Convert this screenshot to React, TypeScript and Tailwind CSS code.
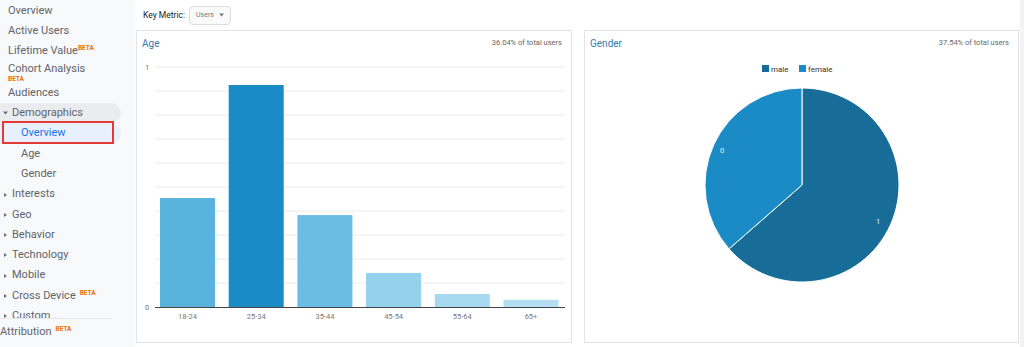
import React from "react";

type Item = {
  label: string;
  arrow?: "right" | "down";
  beta?: "sup" | "space" | "below";
  sub?: boolean;
  active?: boolean;
  open?: boolean;
};

const items: Item[] = [
  { label: "Overview" },
  { label: "Active Users" },
  { label: "Lifetime Value", beta: "sup" },
  { label: "Cohort Analysis", beta: "below" },
  { label: "Audiences" },
  { label: "Demographics", arrow: "down", open: true },
  { label: "Overview", sub: true, active: true },
  { label: "Age", sub: true },
  { label: "Gender", sub: true },
  { label: "Interests", arrow: "right" },
  { label: "Geo", arrow: "right" },
  { label: "Behavior", arrow: "right" },
  { label: "Technology", arrow: "right" },
  { label: "Mobile", arrow: "right" },
  { label: "Cross Device", arrow: "right", beta: "space" },
  { label: "Custom...", arrow: "right" },
];

const ages = [
  { label: "18-24", value: 0.454, color: "#5ab3dc" },
  { label: "25-34", value: 0.925, color: "#1b8bc6" },
  { label: "35-44", value: 0.383, color: "#6cbde3" },
  { label: "45-54", value: 0.142, color: "#94d1ed" },
  { label: "55-64", value: 0.054, color: "#a6d9f0" },
  { label: "65+", value: 0.03, color: "#b3dff3" },
];

function Beta({ className = "" }: { className?: string }) {
  return (
    <span className={`text-[6.5px] font-bold leading-none text-[#e8710a] ${className}`}>BETA</span>
  );
}

function Arrow({ dir }: { dir: "right" | "down" }) {
  return (
    <svg width="5" height="6" viewBox="0 0 5 6" className="mr-[4px] shrink-0">
      {dir === "right" ? (
        <polygon points="1,1 4,3 1,5" fill="#6b6f74" />
      ) : (
        <polygon points="0,1.5 5,1.5 2.5,4.5" fill="#6b6f74" />
      )}
    </svg>
  );
}

function NavItem({ item }: { item: Item }) {
  if (item.beta === "below") {
    return (
      <div className="flex h-[21px] flex-col justify-start pl-2 pt-[1px] text-[11px] leading-[12px] text-[#60646a]">
        <span>{item.label}</span>
        <Beta className="mt-[1px]" />
      </div>
    );
  }
  return (
    <div
      className={`relative flex h-[20.3px] w-[121px] items-center rounded-r-full text-[11px] ${
        item.arrow ? "pl-[3px]" : item.sub ? "pl-[21px]" : "pl-2"
      } ${item.open ? "bg-[#eaecef]" : ""} ${item.active ? "bg-[#e8f0fe] text-[#1a73e8]" : "text-[#60646a]"}`}
    >
      {item.arrow && <Arrow dir={item.arrow} />}
      <span className="whitespace-nowrap">{item.label}</span>
      {item.beta === "sup" && <Beta className="mt-[3px] self-start" />}
      {item.beta === "space" && <Beta className="ml-[4px] mt-[4px] self-start" />}
      {item.active && (
        <div className="absolute left-[2px] top-[-2px] h-[23px] w-[112px] border-2 border-[#e53935]" />
      )}
    </div>
  );
}

function AgeChart() {
  const grid = Array.from({ length: 10 }, (_, i) => 12 + i * 24);
  return (
    <svg width="434" height="287" className="block" style={{ fontFamily: "Roboto, Arial, sans-serif" }}>
      {grid.map((y) => (
        <line key={y} x1="18" x2="428" y1={y} y2={y} stroke="#ececec" strokeWidth="1" />
      ))}
      <text x="10" y="15" fontSize="7.5" fill="#777" textAnchor="middle">1</text>
      <text x="10" y="255" fontSize="7.5" fill="#777" textAnchor="middle">0</text>
      {ages.map((a, i) => {
        const x = 23 + i * 68.7;
        const h = a.value * 240;
        return (
          <g key={a.label}>
            <rect x={x} y={252 - h} width="55" height={h} fill={a.color} />
            <text x={x + 27.5} y="264" fontSize="7.5" fill="#777" textAnchor="middle">
              {a.label}
            </text>
          </g>
        );
      })}
      <line x1="18" x2="428" y1="252.5" y2="252.5" stroke="#444" strokeWidth="1" />
    </svg>
  );
}

function GenderChart() {
  const cx = 217;
  const cy = 130;
  const r = 97;
  const a = (228.8 * Math.PI) / 180;
  const ex = cx + r * Math.sin(a);
  const ey = cy - r * Math.cos(a);
  return (
    <svg width="433" height="287" className="block" style={{ fontFamily: "Roboto, Arial, sans-serif" }}>
      <rect x="177" y="10" width="7" height="7" fill="#176c98" />
      <text x="186" y="16.5" fontSize="8" fill="#333">male</text>
      <rect x="214" y="10" width="7" height="7" fill="#1a8bc5" />
      <text x="223" y="16.5" fontSize="8" fill="#333">female</text>
      <path
        d={`M${cx},${cy} L${cx},${cy - r} A${r},${r} 0 1 1 ${ex},${ey} Z`}
        fill="#176c98"
        stroke="#fff"
        strokeWidth="1"
      />
      <path
        d={`M${cx},${cy} L${ex},${ey} A${r},${r} 0 0 1 ${cx},${cy - r} Z`}
        fill="#1a8bc5"
        stroke="#fff"
        strokeWidth="1"
      />
      <text x="293" y="169" fontSize="7.5" fill="#e6eef3" textAnchor="middle">1</text>
      <text x="137" y="98" fontSize="7.5" fill="#e6eef3" textAnchor="middle">0</text>
    </svg>
  );
}

function Panel({ title, share, children, width }: { title: string; share: string; children: React.ReactNode; width: string }) {
  return (
    <div className={`flex h-[313px] flex-col border border-[#e3e3e3] bg-white ${width}`}>
      <div className="flex h-6 items-center justify-between pl-[5px] pr-[9px]">
        <span className="text-[10px] text-[#3a79a8]">{title}</span>
        <span className="text-[7.5px] text-[#666]">{share}</span>
      </div>
      {children}
    </div>
  );
}

export default function App() {
  return (
    <div className="flex h-[347px] w-[1024px] overflow-hidden bg-white" style={{ fontFamily: "Roboto, Arial, sans-serif" }}>
      <aside className="flex w-[135px] shrink-0 flex-col bg-[#f8f9fa]">
        <div className="h-[318px] overflow-hidden pt-px">
          {items.map((item, i) => (
            <NavItem key={i} item={item} />
          ))}
        </div>
        <div className="w-[112px] border-t border-[#e4e6e8]" />
        <div className="mt-[3px] flex h-5 items-center text-[11px] text-[#60646a]">
          <span>Attribution</span>
          <Beta className="ml-[4px] mt-[4px] self-start" />
        </div>
      </aside>

      <main className="flex flex-1 flex-col pl-px">
        <div className="flex h-[30px] items-center pl-[7px]">
          <span className="text-[8.5px] text-[#222]">Key Metric:</span>
          <div className="ml-[4px] flex h-[19px] w-[42px] items-center justify-center gap-[5px] rounded-sm border border-[#dcdcdc] bg-[#fafafa]">
            <span className="text-[7px] text-[#777]">Users</span>
            <svg width="5" height="4" viewBox="0 0 5 4">
              <polygon points="0,0.5 5,0.5 2.5,3.5" fill="#777" />
            </svg>
          </div>
        </div>
        <div className="flex gap-3">
          <Panel title="Age" share="36.04% of total users" width="w-[436px]">
            <AgeChart />
          </Panel>
          <Panel title="Gender" share="37.54% of total users" width="w-[435px]">
            <GenderChart />
          </Panel>
        </div>
      </main>
      <div className="w-[4px] bg-[#f1f3f4]" />
    </div>
  );
}
